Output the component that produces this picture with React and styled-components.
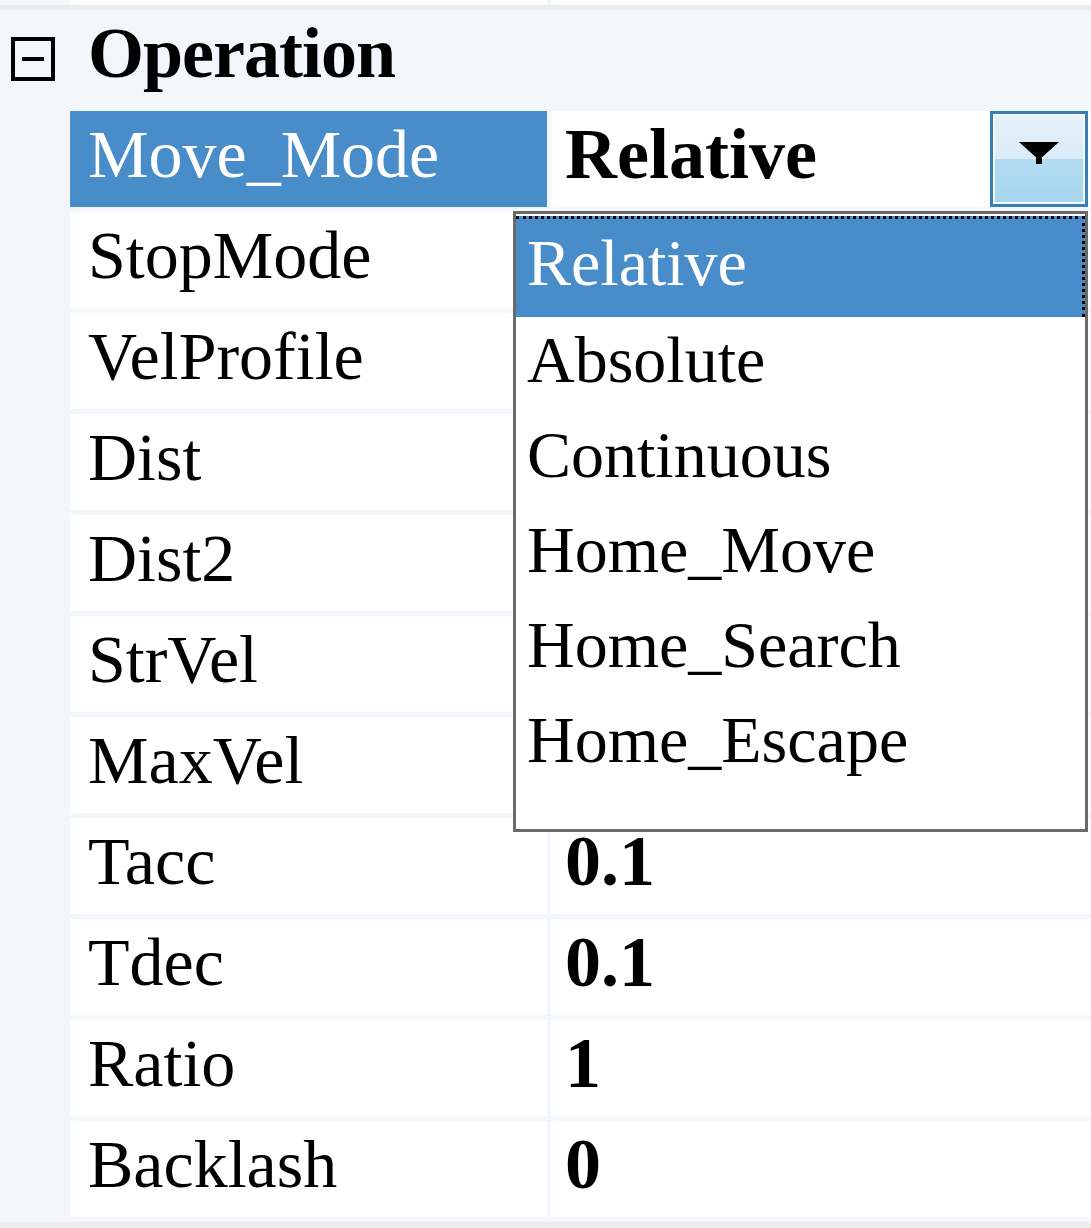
import styled, { createGlobalStyle } from "styled-components";

// values of the rows under the open list are not visible, so they stay empty
const rows = [
  { name: "StopMode", value: "" },
  { name: "VelProfile", value: "" },
  { name: "Dist", value: "" },
  { name: "Dist2", value: "" },
  { name: "StrVel", value: "" },
  { name: "MaxVel", value: "" },
  { name: "Tacc", value: "0.1" },
  { name: "Tdec", value: "0.1" },
  { name: "Ratio", value: "1" },
  { name: "Backlash", value: "0" },
];

const options = ["Relative", "Absolute", "Continuous", "Home_Move", "Home_Search", "Home_Escape"];

const App = () => {
  return (
    <>
      <GlobalStyle />
      <Grid>
        <StubRow>
          <StubCell $w="477px" />
          <StubCell $w="540px" />
        </StubRow>
        <TopLine />
        <CategoryRow>
          <Expander>
            <svg width="44" height="44" viewBox="0 0 44 44">
              <rect x="2" y="2" width="40" height="40" fill="none" stroke="#000" strokeWidth="4" />
              <rect x="11" y="20" width="22" height="4" fill="#000" />
            </svg>
          </Expander>
          <CategoryTitle>Operation</CategoryTitle>
        </CategoryRow>
        <Rows>
          <Row>
            <NameCell $selected>Move_Mode</NameCell>
            <ValueCell>
              <span>Relative</span>
              <DropButton>
                <svg width="44" height="26" viewBox="0 0 44 26">
                  <polygon points="2,2 42,2 22,20" fill="#000" />
                  <rect x="19" y="18" width="6" height="6" fill="#000" />
                </svg>
              </DropButton>
            </ValueCell>
          </Row>
          {rows.map((r) => (
            <Row key={r.name}>
              <NameCell>{r.name}</NameCell>
              <ValueCell>{r.value}</ValueCell>
            </Row>
          ))}
        </Rows>
        <BottomLine />
        <DropList>
          {options.map((o, i) => (
            <Option key={o} $active={i === 0}>
              {o}
            </Option>
          ))}
        </DropList>
      </Grid>
    </>
  );
};

export default App;

const GlobalStyle = createGlobalStyle`
  html, body {
    margin: 0;
    padding: 0;
    background: #f3f6fb;
  }
`;

const Grid = styled.div`
  position: relative;
  width: 1091px;
  height: 1228px;
  overflow: hidden;
  background: #f3f6fb;
  font-family: "Liberation Serif", "DejaVu Serif", serif;
  color: #000;
`;

const StubRow = styled.div`
  display: flex;
  gap: 4px;
  padding-left: 70px;
  height: 5px;
`;

const StubCell = styled.div`
  width: ${({ $w }) => $w};
  background: #fff;
`;

const TopLine = styled.div`
  height: 5px;
  background: #ececec;
`;

const CategoryRow = styled.div`
  display: flex;
  align-items: center;
  height: 96px;
  margin-bottom: 5px;
`;

const Expander = styled.div`
  width: 88px;
  display: flex;
  padding-left: 11px;
  padding-top: 2px;
  box-sizing: border-box;
  svg {
    display: block;
  }
`;

const CategoryTitle = styled.div`
  font-size: 72px;
  font-weight: bold;
  line-height: 86px;
  padding-bottom: 10px;
  letter-spacing: -1px;
`;

const Rows = styled.div`
  display: flex;
  flex-direction: column;
  gap: 5px;
`;

const Row = styled.div`
  display: flex;
  gap: 4px;
  padding-left: 70px;
  height: 96px;
`;

const NameCell = styled.div`
  width: 477px;
  box-sizing: border-box;
  padding: 0 0 10px 18px;
  display: flex;
  align-items: center;
  font-size: 68px;
  white-space: nowrap;
  background: ${({ $selected }) => ($selected ? "#488cc9" : "#fff")};
  color: ${({ $selected }) => ($selected ? "#fff" : "#000")};
`;

const ValueCell = styled.div`
  flex: 1;
  position: relative;
  box-sizing: border-box;
  padding: 0 0 10px 14px;
  display: flex;
  align-items: center;
  font-size: 72px;
  font-weight: bold;
  white-space: nowrap;
  background: #fff;
`;

const DropButton = styled.div`
  position: absolute;
  top: 0;
  right: 3px;
  width: 98px;
  height: 96px;
  box-sizing: border-box;
  border: 3px solid #3c7db3;
  box-shadow: inset 0 0 0 2px #f4f9fd;
  background: linear-gradient(to bottom, #e6f1fa 0%, #dbecf8 50%, #b3dcf2 50%, #a6d4ee 100%);
  display: flex;
  justify-content: center;
  padding-top: 26px;
  svg {
    display: block;
  }
`;

const BottomLine = styled.div`
  margin-top: 5px;
  height: 6px;
  background: #ececec;
`;

const DropList = styled.div`
  position: absolute;
  left: 513px;
  top: 211px;
  width: 575px;
  height: 621px;
  box-sizing: border-box;
  border: 3px solid #6a6a6a;
  background: #fff;
  padding-top: 2px;
`;

const Option = styled.div`
  height: ${({ $active }) => ($active ? "101px" : "95px")};
  box-sizing: border-box;
  padding: 0 0 10px 11px;
  display: flex;
  align-items: center;
  font-size: 66px;
  white-space: nowrap;
  background: ${({ $active }) => ($active ? "#488cc9" : "#fff")};
  color: ${({ $active }) => ($active ? "#fff" : "#000")};
  border-top: ${({ $active }) => ($active ? "3px dotted #000" : "none")};
  border-right: ${({ $active }) => ($active ? "3px dotted #000" : "none")};
`;
